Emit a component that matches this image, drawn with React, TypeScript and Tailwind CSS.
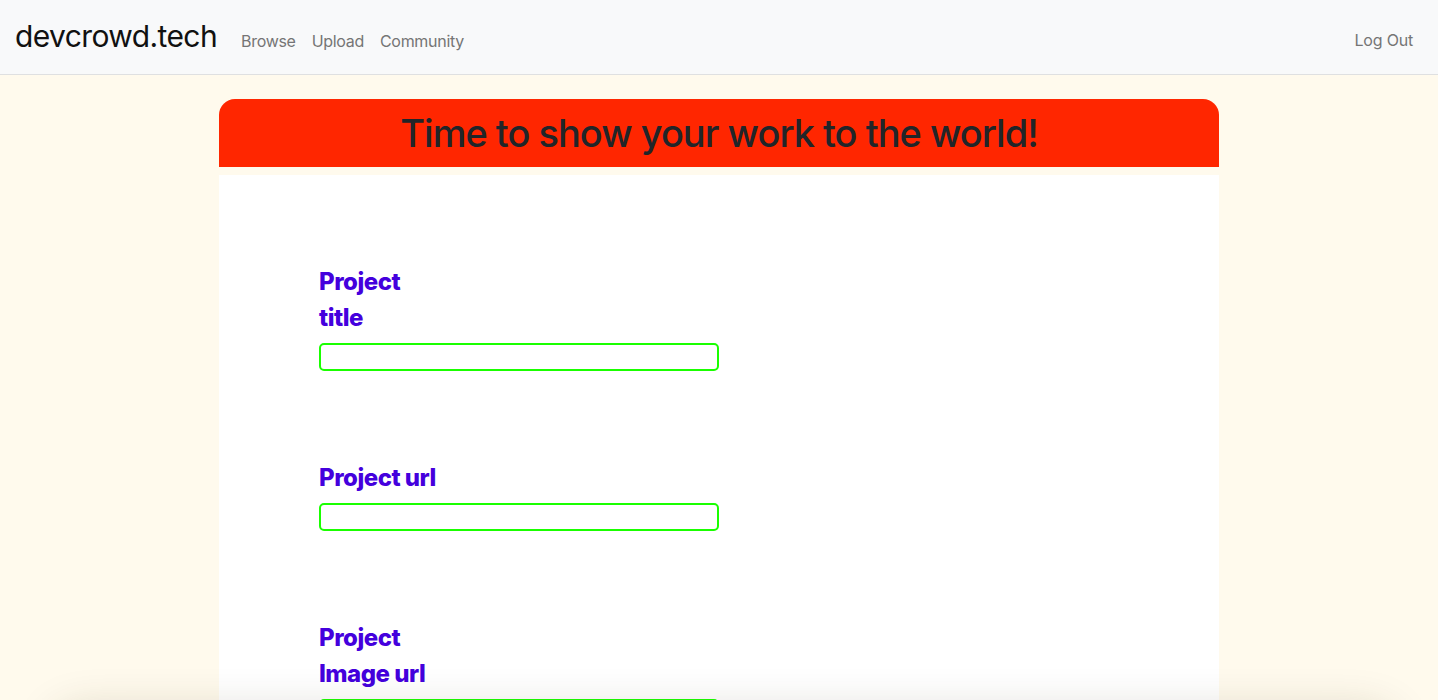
import React from "react"

const fields = [
  { id: "title", label: "Project title" },
  { id: "url", label: "Project url" },
  { id: "image", label: "Project Image url" },
  { id: "desc", label: "Project description" },
]

export default function App() {
  return (
    <div className="min-h-screen bg-[#fffaed] font-['Inter',sans-serif]">
      {/* navbar */}
      <nav className="flex h-[75px] items-center justify-between border-b border-[#dfe0e1] bg-[#f8f9fa] pl-[15px] pr-[25px]">
        <div className="flex items-baseline">
          <a className="mr-[24px] text-[30px] leading-none tracking-[-0.6px] text-[#111]" href="#">
            devcrowd.tech
          </a>
          <div className="flex gap-[16px] text-[16px] tracking-[-0.3px] text-[#757575]">
            <a href="#">Browse</a>
            <a href="#">Upload</a>
            <a href="#">Community</a>
          </div>
        </div>
        <a href="#" className="mt-[6px] text-[16px] tracking-[-0.2px] text-[#757575]">
          Log Out
        </a>
      </nav>

      <main className="mx-auto w-[1000px] pt-[24px]">
        <div className="flex h-[68px] items-center justify-center rounded-t-[16px] bg-[#ff2600]">
          <h1 className="text-[38px] font-medium leading-none tracking-[-1px] text-[#212529]">
            Time to show your work to the world!
          </h1>
        </div>

        <form className="mt-[8px] bg-white px-[100px] pb-[120px]">
          {fields.map((f) => (
            <div key={f.id} className="pt-[89px]">
              <label
                htmlFor={f.id}
                className="block w-[125px] text-[24px] font-extrabold leading-[36px] tracking-[-0.5px] text-[#4400dd]"
              >
                {f.label}
              </label>
              <input
                id={f.id}
                type="text"
                className="mt-[7px] block h-[28px] w-[400px] rounded-[5px] border-2 border-[#1aff00] bg-white px-2 outline-none"
              />
            </div>
          ))}
        </form>
      </main>

      <div className="fixed left-[60px] right-[50px] top-[718px] h-[40px] rounded-[30px] bg-white shadow-[0_0_45px_6px_rgba(60,50,20,0.2)]" />
    </div>
  )
}
